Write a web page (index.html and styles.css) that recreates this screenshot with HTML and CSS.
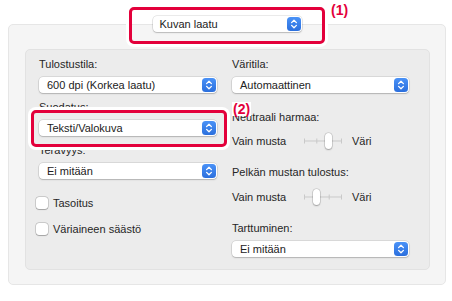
FILE: index.html
```html
<!DOCTYPE html>
<html lang="fi">
<head>
    <meta charset="UTF-8">
    <meta name="viewport" content="width=device-width, initial-scale=1.0">
    <title>Kuvan laatu</title>
    <link rel="stylesheet" href="styles.css">
</head>
<body>
    <div class="window">
        <div class="source-row">
            <div class="popup popup-source">
                <span>Kuvan laatu</span>
                <i class="stepper"><svg viewBox="0 0 14 14" width="14" height="14"><path d="M4.6 5.6 7 3.2l2.4 2.4M4.6 8.4 7 10.8l2.4-2.4"/></svg></i>
            </div>
        </div>
        <div class="panel">
            <div class="group">
                <div class="col">
                    <div class="field-label">Tulostustila:</div>
                    <div class="popup">
                        <span>600 dpi (Korkea laatu)</span>
                        <i class="stepper"><svg viewBox="0 0 14 14" width="14" height="14"><path d="M4.6 5.6 7 3.2l2.4 2.4M4.6 8.4 7 10.8l2.4-2.4"/></svg></i>
                    </div>
                    <div class="field-label">Suodatus:</div>
                    <div class="popup">
                        <span>Teksti/Valokuva</span>
                        <i class="stepper"><svg viewBox="0 0 14 14" width="14" height="14"><path d="M4.6 5.6 7 3.2l2.4 2.4M4.6 8.4 7 10.8l2.4-2.4"/></svg></i>
                    </div>
                    <div class="field-label">Terävyys:</div>
                    <div class="popup">
                        <span>Ei mitään</span>
                        <i class="stepper"><svg viewBox="0 0 14 14" width="14" height="14"><path d="M4.6 5.6 7 3.2l2.4 2.4M4.6 8.4 7 10.8l2.4-2.4"/></svg></i>
                    </div>
                    <label class="check first"><i class="box"></i>Tasoitus</label>
                    <label class="check"><i class="box"></i>Väriaineen säästö</label>
                </div>
                <div class="col">
                    <div class="field-label">Väritila:</div>
                    <div class="popup">
                        <span>Automaattinen</span>
                        <i class="stepper"><svg viewBox="0 0 14 14" width="14" height="14"><path d="M4.6 5.6 7 3.2l2.4 2.4M4.6 8.4 7 10.8l2.4-2.4"/></svg></i>
                    </div>
                    <div class="field-label wide">Neutraali harmaa:</div>
                    <div class="slider-row">
                        <span class="slider-text">Vain musta</span>
                        <div class="slider">
                            <svg viewBox="0 0 38 16" width="38" height="16"><path d="M0 8h38M0.5 5.5v5M12.8 5.5v5M25.2 5.5v5M37.5 5.5v5"/></svg>
                            <i class="knob pos-2"></i>
                        </div>
                        <span class="slider-end">Väri</span>
                    </div>
                    <div class="field-label wide">Pelkän mustan tulostus:</div>
                    <div class="slider-row">
                        <span class="slider-text">Vain musta</span>
                        <div class="slider">
                            <svg viewBox="0 0 38 16" width="38" height="16"><path d="M0 8h38M0.5 5.5v5M12.8 5.5v5M25.2 5.5v5M37.5 5.5v5"/></svg>
                            <i class="knob pos-1"></i>
                        </div>
                        <span class="slider-end">Väri</span>
                    </div>
                    <div class="field-label wide">Tarttuminen:</div>
                    <div class="popup">
                        <span>Ei mitään</span>
                        <i class="stepper"><svg viewBox="0 0 14 14" width="14" height="14"><path d="M4.6 5.6 7 3.2l2.4 2.4M4.6 8.4 7 10.8l2.4-2.4"/></svg></i>
                    </div>
                </div>
            </div>
        </div>
    </div>

    <div class="callout callout-1"></div>
    <span class="callout-num num-1">(1)</span>
    <div class="callout callout-2"></div>
    <span class="callout-num num-2">(2)</span>
</body>
</html>
```

FILE: styles.css
```css
* {
    box-sizing: border-box;
}
body {
    margin: 0;
    background: #fff;
    font-family: 'Liberation Sans', Arial, sans-serif;
    font-size: 11px;
    color: #262626;
}
.window {
    padding: 16px 6px 0 8px;
}
.source-row {
    display: flex;
    justify-content: center;
    height: 16px;
    margin-bottom: -8px;
    position: relative;
    z-index: 1;
}
.popup {
    display: flex;
    align-items: center;
    height: 16px;
    line-height: 16px;
    padding: 0 1px 0 8px;
    background: #fff;
    border-radius: 4px;
    box-shadow: 0 0 0 0.5px rgba(0, 0, 0, 0.16), 0 1px 1.5px rgba(0, 0, 0, 0.18);
    color: #222;
}
.popup span {
    flex: 1;
}
.popup-source {
    width: 149px;
    padding-left: 7px;
}
.stepper {
    display: flex;
    width: 14px;
    height: 14px;
    border-radius: 3.5px;
    background: linear-gradient(#4a92f7, #2b6fdd);
}
.stepper path {
    fill: none;
    stroke: #fff;
    stroke-width: 1.3;
    stroke-linecap: round;
    stroke-linejoin: round;
}
.panel {
    height: 261px;
    padding: 24px 15px 14px 16px;
    background: #f5f5f5;
    border: 1px solid #e6e6e6;
    border-radius: 5px;
}
.group {
    display: grid;
    grid-template-columns: 178px 177px;
    column-gap: 15px;
    height: 100%;
    padding: 8px 0 0 13px;
    background: #ececec;
    border: 1px solid #e2e2e2;
    border-radius: 5px;
}
.col {
    display: flex;
    flex-direction: column;
}
.field-label {
    line-height: 13px;
}
.field-label + .popup {
    margin-top: 6px;
}
.popup + .field-label {
    margin-top: 8px;
}
.popup + .field-label.wide,
.slider-row + .field-label.wide {
    margin-top: 18px;
}
.slider-row + .field-label.wide {
    margin-top: 17px;
}
.slider-row + .field-label.wide + .popup {
    margin-top: 6px;
}
.check {
    display: flex;
    align-items: center;
    height: 14px;
    margin: 12px 0 0 -3px;
}
.check.first {
    margin-top: 17px;
}
.box {
    width: 12px;
    height: 12px;
    margin-right: 5px;
    background: #fff;
    border-radius: 3px;
    box-shadow: 0 0 0 0.5px rgba(0, 0, 0, 0.25), 0 0.5px 1px rgba(0, 0, 0, 0.2);
}
.slider-row {
    display: flex;
    align-items: center;
    height: 16px;
    margin-top: 9px;
}
.slider-row + .field-label + .slider-row {
    margin-top: 10px;
}
.slider-text {
    width: 72px;
}
.slider {
    position: relative;
    width: 38px;
    height: 16px;
}
.slider svg {
    display: block;
}
.slider path {
    stroke: #c9c9c9;
    stroke-width: 1;
    fill: none;
}
.knob {
    position: absolute;
    top: 0;
    width: 7px;
    height: 16px;
    background: #fff;
    border-radius: 4px;
    box-shadow: 0 0 0 0.5px rgba(0, 0, 0, 0.2), 0 1px 1.5px rgba(0, 0, 0, 0.25);
}
.knob.pos-1 { left: 9px; }
.knob.pos-2 { left: 21px; }
.slider-end {
    margin-left: 10px;
}
.callout {
    position: absolute;
    width: 196px;
    height: 37px;
    border: 3px solid #e3003b;
    border-radius: 5px;
    box-shadow: 0 0 0 3px #fff;
}
.callout-1 { left: 129px; top: 7px; }
.callout-2 { left: 31px; top: 110px; }
.callout-num {
    position: absolute;
    font-size: 14px;
    line-height: 14px;
    font-weight: bold;
    color: #e3003b;
}
.num-1 { left: 331px; top: 3px; }
.num-2 { left: 232px; top: 102px; padding: 0 1px; background: #fff; }
```
